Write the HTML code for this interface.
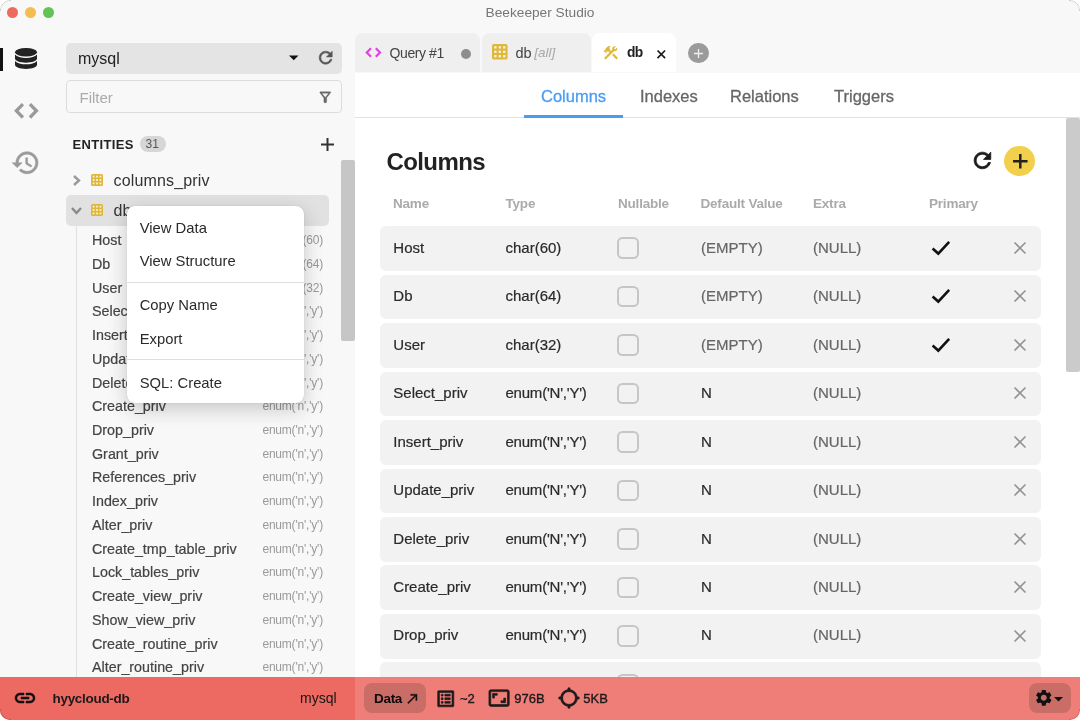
<!DOCTYPE html>
<html lang="en">
<head>
<meta charset="utf-8">
<title>Beekeeper Studio</title>
<style>
*{box-sizing:border-box;margin:0;padding:0}
html,body{width:1080px;height:720px;overflow:hidden;background:#fff;font-family:"Liberation Sans",sans-serif;color:#222}
#win{position:absolute;left:0;top:0;width:1080px;height:720px;background:#f8f8f8;border-radius:10px;overflow:hidden;will-change:transform}
.abs{position:absolute}
.t{position:absolute;white-space:nowrap;line-height:1}
svg{position:absolute;overflow:visible}
/* title bar */
.tl{position:absolute;top:7px;width:11px;height:11px;border-radius:50%}
#title{left:0;width:1080px;top:6px;text-align:center;font-size:13.700px;color:#767676}
/* sidebar */
#dbsel{left:66px;top:43px;width:276px;height:30.700px;background:#e4e4e4;border-radius:5px}
#filter{left:66px;top:80px;width:276px;height:33px;border:1px solid #dcdcdc;border-radius:4px;background:#f8f8f8}
.col{left:92px;font-size:14.300px;color:#444;-webkit-text-stroke:.2px}
.typ{right:757px;font-size:12px;letter-spacing:-.2px;color:#9a9a9a}
/* menu */
#menu{left:126.700px;top:205.700px;width:177.600px;height:197.300px;background:#fff;border-radius:8px;box-shadow:0 6px 20px rgba(0,0,0,.2),0 0 1px rgba(0,0,0,.25)}
#menu .t{left:13px;font-size:14.800px;color:#2a2a2a}
#menu .hr{position:absolute;left:0;width:177.600px;height:1px;background:#dedede}
/* main */
#main{left:354.500px;top:72.500px;width:726px;height:605px;background:#fff}
.tab{position:absolute;top:36px;height:36px;background:#efefef;border-radius:8px 8px 0 0}
.sub{font-size:16.500px;color:#666;top:88.200px;-webkit-text-stroke:.3px}
.th{font-size:13.500px;font-weight:bold;letter-spacing:-.2px;color:#aaa;top:196.600px}
.row{position:absolute;left:380px;width:661.200px;height:44.700px;background:#f2f2f2;border-radius:6px}
.row .t{font-size:15px;color:#2a2a2a;-webkit-text-stroke:.2px}
.row .e{letter-spacing:-.22px}
.row .g{color:#666}
.cb{position:absolute;left:237.400px;top:11.300px;width:21.400px;height:21.400px;border:2px solid #c6c6c6;border-radius:5.500px}
/* status */
#status{left:0;top:676.700px;width:1080px;height:43.300px;background:#f07e78}
#status .l{position:absolute;left:0;top:0;width:354.500px;height:43.300px;background:#ec6a62}
#status .t{font-size:14px;color:#1a1a1a}
#status .s{font-size:13px;-webkit-text-stroke:.35px #1a1a1a}
</style>
</head>
<body>
<div id="win">
<!-- TITLEBAR -->
<div class="tl" style="left:7px;background:#ee6a5f"></div>
<div class="tl" style="left:25px;background:#f5bd4f"></div>
<div class="tl" style="left:43px;background:#61c454"></div>
<div class="t" id="title">Beekeeper Studio</div>
<!-- ICONBAR -->
<div class="abs" style="left:0;top:48px;width:3px;height:23px;background:#111"></div>
<svg style="left:15px;top:48px" width="22" height="21" viewBox="0 0 22 21"><g fill="#222"><ellipse cx="11" cy="4.2" rx="11" ry="4.2"/><path d="M0 6.6c2 2.4 6 3.4 11 3.4s9-1 11-3.400v3.900c0 2.300-4.900 4.200-11 4.200S0 12.800 0 10.500z"/><path d="M0 12.900c2 2.400 6 3.400 11 3.400s9-1 11-3.400v3.900c0 2.300-4.900 4.200-11 4.200S0 19.100 0 16.800z"/></g></svg>
<svg style="left:0;top:0" width="52" height="130" viewBox="0 0 52 130"><path d="M22.900 104.200L16.400 110.800l6.500 6.700M29.900 104.200l6.500 6.600-6.500 6.700" stroke="#9a9a9a" stroke-width="3.300" fill="none"/></svg>
<svg style="left:11.300px;top:148.100px" width="29.500" height="29.500" viewBox="0 0 24 24"><path fill="#9a9a9a" stroke="#9a9a9a" stroke-width=".45" d="M13 3c-4.970 0-9 4.030-9 9H1l3.890 3.890.07.140L9 12H6c0-3.870 3.130-7 7-7s7 3.130 7 7-3.130 7-7 7c-1.930 0-3.680-.79-4.940-2.060l-1.420 1.420C8.270 19.990 10.510 21 13 21c4.970 0 9-4.030 9-9s-4.030-9-9-9zm-1 5v5l4.280 2.540.72-1.210-3.500-2.080V8H12z"/></svg>
<!-- SIDEBAR -->
<div class="abs" id="dbsel"></div>
<div class="t" style="left:78px;top:50.600px;font-size:16px;color:#222">mysql</div>
<svg style="left:289px;top:55.300px" width="9.500" height="5.500" viewBox="0 0 10 5"><path d="M0 0h10L5 5z" fill="#111"/></svg>
<svg style="left:316px;top:48px" width="19.400" height="19.400" viewBox="0 0 24 24"><path fill="#555" stroke="#555" stroke-width=".8" d="M17.650 6.350C16.200 4.900 14.210 4 12 4c-4.420 0-7.990 3.580-7.990 8s3.570 8 7.990 8c3.730 0 6.840-2.550 7.730-6h-2.080c-.82 2.330-3.040 4-5.650 4-3.310 0-6-2.690-6-6s2.690-6 6-6c1.660 0 3.140.69 4.220 1.780L13 11h7V4l-2.350 2.350z"/></svg>
<div class="abs" id="filter"></div>
<div class="t" style="left:79.500px;top:89.800px;font-size:15px;color:#aaa">Filter</div>
<svg style="left:317px;top:89px" width="16.500" height="16.500" viewBox="0 0 24 24"><path fill="#666" stroke="#666" stroke-width=".5" d="M7 6h10l-5.010 6.300L7 6zm-2.750-.39C6.270 8.200 10 13 10 13v6c0 .55.450 1 1 1h2c.55 0 1-.45 1-1v-6s3.720-4.800 5.740-7.390c.51-.66.040-1.610-.79-1.610H5.040c-.83 0-1.300.95-.79 1.610z"/></svg>
<div class="t" style="left:72.500px;top:138.200px;font-size:13px;font-weight:bold;letter-spacing:.35px;color:#222">ENTITIES</div>
<div class="abs" style="left:139.700px;top:135.800px;width:26.500px;height:16px;border-radius:8px;background:#d6d6d6"></div>
<div class="t" style="left:145.500px;top:137.800px;font-size:12px;color:#555">31</div>
<svg style="left:321px;top:137.500px" width="13" height="13" viewBox="0 0 13 13"><path d="M6.500 0v13M0 6.500h13" stroke="#333" stroke-width="2" fill="none"/></svg>
<div class="abs" style="left:341px;top:160px;width:13.600px;height:180.800px;background:#c6c6c6;border-radius:2px"></div>
<svg style="left:73px;top:174.700px" width="7.500" height="11" viewBox="0 0 7.500 11"><path d="M1 1l5 4.500L1 10" stroke="#999" stroke-width="2.400" fill="none"/></svg>
<svg style="left:91.200px;top:174.200px" width="12" height="12" viewBox="0 0 12 12"><rect width="12" height="12" rx="1.500" fill="#dfb73a"/><g fill="#fbf3d8"><rect x="1.7" y="1.7" width="1.800" height="1.800"/><rect x="5.1" y="1.7" width="1.800" height="1.800"/><rect x="8.5" y="1.7" width="1.800" height="1.800"/><rect x="1.7" y="5.1" width="1.800" height="1.800"/><rect x="5.1" y="5.1" width="1.800" height="1.800"/><rect x="8.5" y="5.1" width="1.800" height="1.800"/><rect x="1.7" y="8.5" width="1.800" height="1.800"/><rect x="5.1" y="8.5" width="1.800" height="1.800"/><rect x="8.5" y="8.5" width="1.800" height="1.800"/></g></svg>
<div class="t" style="left:113.500px;top:173.300px;font-size:16px;letter-spacing:.15px;color:#333">columns_priv</div>
<div class="abs" style="left:66px;top:195px;width:262.500px;height:30.500px;background:#e1e1e1;border-radius:5px"></div>
<svg style="left:71.300px;top:206.700px" width="11" height="7.500" viewBox="0 0 11 7.500"><path d="M1 1l4.500 5L10 1" stroke="#8a8a8a" stroke-width="2.400" fill="none"/></svg>
<svg style="left:91.200px;top:204.200px" width="12" height="12" viewBox="0 0 12 12"><rect width="12" height="12" rx="1.500" fill="#dfb73a"/><g fill="#fbf3d8"><rect x="1.7" y="1.7" width="1.800" height="1.800"/><rect x="5.1" y="1.7" width="1.800" height="1.800"/><rect x="8.5" y="1.7" width="1.800" height="1.800"/><rect x="1.7" y="5.1" width="1.800" height="1.800"/><rect x="5.1" y="5.1" width="1.800" height="1.800"/><rect x="8.5" y="5.1" width="1.800" height="1.800"/><rect x="1.7" y="8.5" width="1.800" height="1.800"/><rect x="5.1" y="8.5" width="1.800" height="1.800"/><rect x="8.5" y="8.5" width="1.800" height="1.800"/></g></svg>
<div class="t" style="left:113.500px;top:203.300px;font-size:16px;letter-spacing:.15px;color:#333">db</div>
<div class="abs" style="left:76px;top:225.500px;width:1px;height:452px;background:#e0e0e0"></div>
<div class="t col" style="top:233.15px">Host</div><div class="t typ" style="top:234.30px">char(60)</div>
<div class="t col" style="top:257.15px">Db</div><div class="t typ" style="top:258.30px">char(64)</div>
<div class="t col" style="top:281.15px">User</div><div class="t typ" style="top:282.30px">char(32)</div>
<div class="t col" style="top:304.15px">Select_priv</div><div class="t typ" style="top:305.30px">enum('n','y')</div>
<div class="t col" style="top:328.15px">Insert_priv</div><div class="t typ" style="top:329.30px">enum('n','y')</div>
<div class="t col" style="top:352.15px">Update_priv</div><div class="t typ" style="top:353.30px">enum('n','y')</div>
<div class="t col" style="top:376.15px">Delete_priv</div><div class="t typ" style="top:377.30px">enum('n','y')</div>
<div class="t col" style="top:399.15px">Create_priv</div><div class="t typ" style="top:400.30px">enum('n','y')</div>
<div class="t col" style="top:423.15px">Drop_priv</div><div class="t typ" style="top:424.30px">enum('n','y')</div>
<div class="t col" style="top:447.15px">Grant_priv</div><div class="t typ" style="top:448.30px">enum('n','y')</div>
<div class="t col" style="top:470.15px">References_priv</div><div class="t typ" style="top:471.30px">enum('n','y')</div>
<div class="t col" style="top:494.15px">Index_priv</div><div class="t typ" style="top:495.30px">enum('n','y')</div>
<div class="t col" style="top:518.15px">Alter_priv</div><div class="t typ" style="top:519.30px">enum('n','y')</div>
<div class="t col" style="top:542.15px">Create_tmp_table_priv</div><div class="t typ" style="top:543.30px">enum('n','y')</div>
<div class="t col" style="top:565.15px">Lock_tables_priv</div><div class="t typ" style="top:566.30px">enum('n','y')</div>
<div class="t col" style="top:589.15px">Create_view_priv</div><div class="t typ" style="top:590.30px">enum('n','y')</div>
<div class="t col" style="top:613.15px">Show_view_priv</div><div class="t typ" style="top:614.30px">enum('n','y')</div>
<div class="t col" style="top:637.15px">Create_routine_priv</div><div class="t typ" style="top:638.30px">enum('n','y')</div>
<div class="t col" style="top:660.15px">Alter_routine_priv</div><div class="t typ" style="top:661.30px">enum('n','y')</div>
<!-- TABS -->
<div class="tab" style="left:354.700px;top:33.300px;width:125.600px;height:39.200px"></div>
<svg style="left:360px;top:40px" width="30" height="26" viewBox="360 40 30 26"><path d="M371 48.300l-4.200 4.200 4.200 4.200M375.800 48.300l4.200 4.200-4.200 4.200" stroke="#e83ce6" stroke-width="2.200" fill="none"/></svg>
<div class="t" style="left:389.500px;top:45.700px;font-size:14px;letter-spacing:-.4px;color:#444">Query #1</div>
<div class="abs" style="left:461px;top:48.800px;width:10px;height:10px;border-radius:50%;background:#8e8e8e"></div>
<div class="tab" style="left:482px;top:33.300px;width:109.300px;height:39.200px"></div>
<svg style="left:492.200px;top:44.300px" width="15.600" height="15.600" viewBox="0 0 12 12"><rect width="12" height="12" rx="1.500" fill="#dfb73a"/><g fill="#fbf3d8"><rect x="1.7" y="1.7" width="1.800" height="1.800"/><rect x="5.1" y="1.7" width="1.800" height="1.800"/><rect x="8.5" y="1.7" width="1.800" height="1.800"/><rect x="1.7" y="5.1" width="1.800" height="1.800"/><rect x="5.1" y="5.1" width="1.800" height="1.800"/><rect x="8.5" y="5.1" width="1.800" height="1.800"/><rect x="1.7" y="8.5" width="1.800" height="1.800"/><rect x="5.1" y="8.5" width="1.800" height="1.800"/><rect x="8.5" y="8.5" width="1.800" height="1.800"/></g></svg>
<div class="t" style="left:515.500px;top:45.700px;font-size:14.500px;color:#444">db <i style="color:#a8a8a8;font-size:13.500px;margin-left:-1.500px;position:relative;top:-.6px">[all]</i></div>
<div class="tab" style="left:592px;top:33.300px;width:84px;height:39.200px;background:#fff"></div>
<svg style="left:601.500px;top:44px" width="17.500" height="17.500" viewBox="0 0 24 24"><path fill="#dfb73a" d="M13.783 15.172l2.121-2.121 5.996 5.996-2.121 2.121zM17.500 10c1.930 0 3.500-1.570 3.500-3.500 0-.58-.16-1.120-.41-1.600l-2.700 2.700-1.490-1.490 2.700-2.700c-.48-.25-1.020-.41-1.600-.41C15.570 3 14 4.570 14 6.500c0 .41.080.8.210 1.160l-1.850 1.850-1.780-1.780.71-.71-1.410-1.410L12 3.490c-1.170-1.170-3.070-1.170-4.240 0L4.220 7.030l1.410 1.410H2.810l-.71.71 3.540 3.540.71-.71V9.150l1.410 1.410.71-.71 1.780 1.780-7.410 7.410 2.120 2.120L16.340 9.790c.36.130.75.210 1.160.210z"/></svg>
<div class="t" style="left:627px;top:45.700px;font-size:13.800px;font-weight:bold;letter-spacing:-.6px;color:#222">db</div>
<svg style="left:657.200px;top:50px" width="8.600" height="8.600" viewBox="0 0 8.600 8.600"><path d="M.5.500l7.600 7.600M8.100.5L.5 8.100" stroke="#1a1a1a" stroke-width="1.700" fill="none"/></svg>
<div class="abs" style="left:688.200px;top:42.700px;width:20.700px;height:20.700px;border-radius:50%;background:#9b9b9b"></div>
<svg style="left:694px;top:48.500px" width="9" height="9" viewBox="0 0 9 9"><path d="M4.500 0v9M0 4.500h9" stroke="#f0f0f0" stroke-width="1.300" fill="none"/></svg>
<!-- MAIN -->
<div class="abs" id="main"></div>
<div class="abs" style="left:354.500px;top:116.800px;width:726px;height:1.200px;background:#e2e2e2"></div>
<div class="abs" style="left:524px;top:115.300px;width:99px;height:2.700px;background:#4a9cf3"></div>
<div class="t sub" style="left:541px;color:#4a9cf3">Columns</div>
<div class="t sub" style="left:640px">Indexes</div>
<div class="t sub" style="left:730px">Relations</div>
<div class="t sub" style="left:834px">Triggers</div>
<div class="t" style="left:386.500px;top:149.700px;font-size:24px;font-weight:bold;letter-spacing:-.6px;color:#222">Columns</div>
<svg style="left:969.800px;top:148.200px" width="24.900" height="24.900" viewBox="0 0 24 24"><path fill="#1a1a1a" stroke="#1a1a1a" stroke-width=".8" d="M17.650 6.350C16.200 4.900 14.210 4 12 4c-4.420 0-7.990 3.580-7.990 8s3.570 8 7.990 8c3.730 0 6.840-2.550 7.730-6h-2.080c-.82 2.330-3.040 4-5.650 4-3.310 0-6-2.690-6-6s2.690-6 6-6c1.660 0 3.140.69 4.220 1.780L13 11h7V4l-2.350 2.350z"/></svg>
<div class="abs" style="left:1004.400px;top:145.600px;width:30.800px;height:30.800px;border-radius:50%;background:#f2d04c"></div>
<svg style="left:1012.500px;top:153.700px" width="14.600" height="14.600" viewBox="0 0 14.600 14.600"><path d="M7.300 0v14.600M0 7.300h14.600" stroke="#222" stroke-width="2.500" fill="none"/></svg>
<div class="t th" style="left:393px">Name</div>
<div class="t th" style="left:505.500px">Type</div>
<div class="t th" style="left:618px">Nullable</div>
<div class="t th" style="left:700.500px">Default Value</div>
<div class="t th" style="left:813px">Extra</div>
<div class="t th" style="left:929px">Primary</div>
<div class="row" style="top:226.20px"><div class="t" style="left:13.300px;top:14.10px">Host</div><div class="t" style="left:125.500px;top:14.10px">char(60)</div><div class="cb"></div><div class="t g" style="left:321px;top:14.10px">(EMPTY)</div><div class="t g" style="left:433px;top:14.10px">(NULL)</div><svg style="left:551px;top:13.700px" width="20" height="16" viewBox="0 0 20 16"><path d="M1.600 8.600l5.700 5 10.900-11.800" stroke="#111" stroke-width="2.600" fill="none"/></svg><svg style="left:633.800px;top:15.700px" width="12" height="12" viewBox="0 0 12 12"><path d="M.5.500l11 11M11.500.5l-11 11" stroke="#939393" stroke-width="1.600" fill="none"/></svg></div>
<div class="row" style="top:274.66px"><div class="t" style="left:13.300px;top:13.64px">Db</div><div class="t" style="left:125.500px;top:13.64px">char(64)</div><div class="cb"></div><div class="t g" style="left:321px;top:13.64px">(EMPTY)</div><div class="t g" style="left:433px;top:13.64px">(NULL)</div><svg style="left:551px;top:13.700px" width="20" height="16" viewBox="0 0 20 16"><path d="M1.600 8.600l5.700 5 10.900-11.800" stroke="#111" stroke-width="2.600" fill="none"/></svg><svg style="left:633.800px;top:15.700px" width="12" height="12" viewBox="0 0 12 12"><path d="M.5.500l11 11M11.500.5l-11 11" stroke="#939393" stroke-width="1.600" fill="none"/></svg></div>
<div class="row" style="top:323.12px"><div class="t" style="left:13.300px;top:14.18px">User</div><div class="t" style="left:125.500px;top:14.18px">char(32)</div><div class="cb"></div><div class="t g" style="left:321px;top:14.18px">(EMPTY)</div><div class="t g" style="left:433px;top:14.18px">(NULL)</div><svg style="left:551px;top:13.700px" width="20" height="16" viewBox="0 0 20 16"><path d="M1.600 8.600l5.700 5 10.900-11.800" stroke="#111" stroke-width="2.600" fill="none"/></svg><svg style="left:633.800px;top:15.700px" width="12" height="12" viewBox="0 0 12 12"><path d="M.5.500l11 11M11.500.5l-11 11" stroke="#939393" stroke-width="1.600" fill="none"/></svg></div>
<div class="row" style="top:371.58px"><div class="t" style="left:13.300px;top:13.72px">Select_priv</div><div class="t e" style="left:125.500px;top:13.72px">enum('N','Y')</div><div class="cb"></div><div class="t" style="left:321px;top:13.72px">N</div><div class="t g" style="left:433px;top:13.72px">(NULL)</div><svg style="left:633.800px;top:15.700px" width="12" height="12" viewBox="0 0 12 12"><path d="M.5.500l11 11M11.500.5l-11 11" stroke="#939393" stroke-width="1.600" fill="none"/></svg></div>
<div class="row" style="top:420.04px"><div class="t" style="left:13.300px;top:14.26px">Insert_priv</div><div class="t e" style="left:125.500px;top:14.26px">enum('N','Y')</div><div class="cb"></div><div class="t" style="left:321px;top:14.26px">N</div><div class="t g" style="left:433px;top:14.26px">(NULL)</div><svg style="left:633.800px;top:15.700px" width="12" height="12" viewBox="0 0 12 12"><path d="M.5.500l11 11M11.500.5l-11 11" stroke="#939393" stroke-width="1.600" fill="none"/></svg></div>
<div class="row" style="top:468.50px"><div class="t" style="left:13.300px;top:13.80px">Update_priv</div><div class="t e" style="left:125.500px;top:13.80px">enum('N','Y')</div><div class="cb"></div><div class="t" style="left:321px;top:13.80px">N</div><div class="t g" style="left:433px;top:13.80px">(NULL)</div><svg style="left:633.800px;top:15.700px" width="12" height="12" viewBox="0 0 12 12"><path d="M.5.500l11 11M11.500.5l-11 11" stroke="#939393" stroke-width="1.600" fill="none"/></svg></div>
<div class="row" style="top:516.96px"><div class="t" style="left:13.300px;top:14.34px">Delete_priv</div><div class="t e" style="left:125.500px;top:14.34px">enum('N','Y')</div><div class="cb"></div><div class="t" style="left:321px;top:14.34px">N</div><div class="t g" style="left:433px;top:14.34px">(NULL)</div><svg style="left:633.800px;top:15.700px" width="12" height="12" viewBox="0 0 12 12"><path d="M.5.500l11 11M11.500.5l-11 11" stroke="#939393" stroke-width="1.600" fill="none"/></svg></div>
<div class="row" style="top:565.42px"><div class="t" style="left:13.300px;top:13.88px">Create_priv</div><div class="t e" style="left:125.500px;top:13.88px">enum('N','Y')</div><div class="cb"></div><div class="t" style="left:321px;top:13.88px">N</div><div class="t g" style="left:433px;top:13.88px">(NULL)</div><svg style="left:633.800px;top:15.700px" width="12" height="12" viewBox="0 0 12 12"><path d="M.5.500l11 11M11.500.5l-11 11" stroke="#939393" stroke-width="1.600" fill="none"/></svg></div>
<div class="row" style="top:613.88px"><div class="t" style="left:13.300px;top:13.42px">Drop_priv</div><div class="t e" style="left:125.500px;top:13.42px">enum('N','Y')</div><div class="cb"></div><div class="t" style="left:321px;top:13.42px">N</div><div class="t g" style="left:433px;top:13.42px">(NULL)</div><svg style="left:633.800px;top:15.700px" width="12" height="12" viewBox="0 0 12 12"><path d="M.5.500l11 11M11.500.5l-11 11" stroke="#939393" stroke-width="1.600" fill="none"/></svg></div>
<div class="row" style="top:662.34px"><div class="t" style="left:13.300px;top:13.96px">Grant_priv</div><div class="t e" style="left:125.500px;top:13.96px">enum('N','Y')</div><div class="cb"></div><div class="t" style="left:321px;top:13.96px">N</div><div class="t g" style="left:433px;top:13.96px">(NULL)</div><svg style="left:633.800px;top:15.700px" width="12" height="12" viewBox="0 0 12 12"><path d="M.5.500l11 11M11.500.5l-11 11" stroke="#939393" stroke-width="1.600" fill="none"/></svg></div>
<div class="abs" style="left:1066.400px;top:117.800px;width:13.600px;height:254.700px;background:#cbcbcb;border-radius:2px"></div>
<!-- STATUS -->
<div class="abs" id="status"><div class="l"></div>
<svg style="left:13px;top:9.500px" width="24" height="24" viewBox="0 0 24 24"><path fill="#111" stroke="#111" stroke-width=".5" d="M3.900 12c0-1.710 1.390-3.100 3.100-3.100h4V7H7c-2.760 0-5 2.240-5 5s2.240 5 5 5h4v-1.900H7c-1.710 0-3.100-1.390-3.100-3.100zM8 13h8v-2H8v2zm9-6h-4v1.900h4c1.710 0 3.100 1.390 3.100 3.100s-1.390 3.100-3.100 3.100h-4V17h4c2.760 0 5-2.240 5-5s-2.240-5-5-5z"/></svg>
<div class="t" style="left:52.500px;top:14.900px;font-size:13.500px;font-weight:bold;letter-spacing:-.3px">hyycloud-db</div>
<div class="t" style="left:300px;top:14.300px;color:#151515">mysql</div>
<div class="abs" style="left:364px;top:6.300px;width:61.700px;height:30.400px;border-radius:8px;background:#cb6d67"></div>
<div class="t" style="left:374px;top:15.300px;font-size:13.500px;font-weight:bold;letter-spacing:-.3px;color:#0a0a0a">Data</div>
<svg style="left:404.500px;top:14.200px" width="15.200" height="15.200" viewBox="0 0 24 24"><path fill="#111" stroke="#111" stroke-width=".6" d="M9 5v2h6.590L4 18.590 5.410 20 17 8.410V15h2V5z"/></svg>
<svg style="left:434.600px;top:11.050px" width="21.500" height="21.500" viewBox="0 0 24 24"><path fill="#1a1a1a" stroke="#1a1a1a" stroke-width=".7" d="M19 5v14H5V5h14m1.100-2H3.900c-.5 0-.9.400-.9.900v16.200c0 .400.400.900.900.900h16.200c.400 0 .900-.5.900-.9V3.900c0-.5-.5-.9-.9-.9zM11 7h6v2h-6V7zm0 4h6v2h-6v-2zm0 4h6v2h-6zM7 7h2v2H7zm0 4h2v2H7zm0 4h2v2H7z"/></svg>
<div class="t s" style="left:460px;top:15px">~2</div>
<svg style="left:488.300px;top:10.700px" width="22.200" height="22.200" viewBox="0 0 24 24"><path fill="#1a1a1a" stroke="#1a1a1a" stroke-width=".7" d="M19 12h-2v3h-3v2h5v-5zM7 9h3V7H5v5h2V9zm14-6H3c-1.100 0-2 .9-2 2v14c0 1.100.9 2 2 2h18c1.100 0 2-.9 2-2V5c0-1.100-.9-2-2-2zm0 16.010H3V4.990h18v14.020z"/></svg>
<div class="t s" style="left:514.300px;top:15px">976B</div>
<svg style="left:557.800px;top:10.800px" width="22" height="22" viewBox="0 0 24 24"><path fill="#1a1a1a" stroke="#1a1a1a" stroke-width="1" d="M20.940 11c-.46-4.170-3.770-7.480-7.940-7.940V1h-2v2.060C6.830 3.520 3.520 6.830 3.060 11H1v2h2.060c.46 4.170 3.770 7.480 7.940 7.940V23h2v-2.060c4.170-.46 7.480-3.770 7.940-7.940H23v-2h-2.060zM12 19c-3.870 0-7-3.130-7-7s3.130-7 7-7 7 3.130 7 7-3.130 7-7 7z"/></svg>
<div class="t s" style="left:583.300px;top:15px">5KB</div>
<div class="abs" style="left:1029px;top:6.200px;width:42px;height:30.600px;border-radius:8px;background:#cb6d67"></div>
<svg style="left:1033.800px;top:11.700px" width="19.600" height="19.600" viewBox="0 0 24 24"><path fill="#111" d="M19.140 12.940c.04-.3.060-.61.060-.94 0-.32-.02-.64-.07-.94l2.030-1.580c.18-.14.230-.41.120-.61l-1.920-3.320c-.12-.22-.37-.29-.59-.22l-2.390.96c-.5-.38-1.030-.7-1.620-.94l-.36-2.540c-.04-.24-.24-.41-.48-.41h-3.840c-.24 0-.43.170-.47.410l-.36 2.540c-.59.240-1.130.57-1.620.94l-2.390-.96c-.22-.08-.47 0-.59.220L2.740 8.870c-.12.210-.08.470.12.610l2.030 1.580c-.05.300-.09.630-.09.940s.02.640.07.940l-2.030 1.580c-.18.140-.23.410-.12.610l1.920 3.320c.12.220.37.290.59.220l2.390-.96c.5.380 1.030.7 1.620.94l.36 2.540c.05.240.24.410.48.410h3.840c.24 0 .44-.17.470-.41l.36-2.540c.59-.24 1.130-.56 1.620-.94l2.390.96c.22.080.47 0 .59-.22l1.920-3.320c.12-.22.070-.47-.12-.61l-2.010-1.580zM12 15.600c-1.980 0-3.600-1.620-3.600-3.600s1.620-3.600 3.600-3.600 3.600 1.620 3.600 3.600-1.620 3.600-3.600 3.600z"/></svg>
<svg style="left:1054.400px;top:20.200px" width="9" height="4.500" viewBox="0 0 10 5"><path d="M0 0h10L5 5z" fill="#111"/></svg>
</div>
<!-- MENU -->
<div class="abs" id="menu">
<div class="t" style="top:15.200px">View Data</div>
<div class="t" style="top:48.200px">View Structure</div>
<div class="hr" style="top:76.500px"></div>
<div class="t" style="top:92.200px">Copy Name</div>
<div class="t" style="top:126.200px">Export</div>
<div class="hr" style="top:153.500px"></div>
<div class="t" style="top:170.200px">SQL: Create</div>
</div>
<svg style="left:0;top:0;pointer-events:none" width="1080" height="720" viewBox="0 0 1080 720"><g fill="none" stroke="#000" stroke-opacity=".16" stroke-width="1"><path d="M.5 11V10A9.500 9.500 0 0 1 10 .5h1"/><path d="M1069 .5h1a9.500 9.500 0 0 1 9.500 9.500v1"/><path d="M1079.500 709v1a9.500 9.500 0 0 1-9.500 9.500h-1"/><path d="M11 719.500h-1A9.500 9.500 0 0 1 .5 710v-1"/></g></svg>
</div>
</body>
</html>
